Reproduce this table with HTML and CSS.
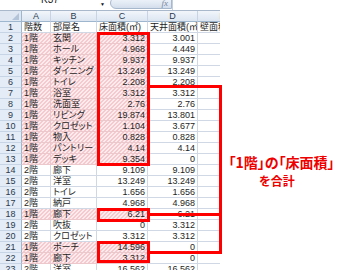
FILE: index.html
```html
<!DOCTYPE html>
<html lang="ja">
<head>
<meta charset="utf-8">
<link rel="stylesheet" href="styles.css">
</head>
<body>
<div class="page">
  <div class="sheet">
    <div class="topbar">
      <div class="namebox">K37</div>
      <div class="dd">▼</div>
      <div class="pill"><span class="fx">fx</span></div>
      <div class="input"></div>
    </div>
    <div class="grid">
      <div class="c corner"><span class="tri"></span></div><div class="c ch">A</div><div class="c ch">B</div><div class="c ch">C</div><div class="c ch">D</div><div class="c ch">E</div>
      <div class="c rh">1</div><div class="c">階数</div><div class="c">部屋名</div><div class="c">床面積(㎡)</div><div class="c">天井面積(㎡)</div><div class="c">壁面積(㎡)</div>
      <div class="c rh">2</div><div class="c hl">1階</div><div class="c hl">玄関</div><div class="c n hl">3.312</div><div class="c n">3.001</div><div class="c"></div>
      <div class="c rh">3</div><div class="c hl">1階</div><div class="c hl">ホール</div><div class="c n hl">4.968</div><div class="c n">4.449</div><div class="c"></div>
      <div class="c rh">4</div><div class="c hl">1階</div><div class="c hl">キッチン</div><div class="c n hl">9.937</div><div class="c n">9.937</div><div class="c"></div>
      <div class="c rh">5</div><div class="c hl">1階</div><div class="c hl">ダイニング</div><div class="c n hl">13.249</div><div class="c n">13.249</div><div class="c"></div>
      <div class="c rh">6</div><div class="c hl">1階</div><div class="c hl">トイレ</div><div class="c n hl">2.208</div><div class="c n">2.208</div><div class="c"></div>
      <div class="c rh">7</div><div class="c hl">1階</div><div class="c hl">浴室</div><div class="c n hl">3.312</div><div class="c n">3.312</div><div class="c"></div>
      <div class="c rh">8</div><div class="c hl">1階</div><div class="c hl">洗面室</div><div class="c n hl">2.76</div><div class="c n">2.76</div><div class="c"></div>
      <div class="c rh">9</div><div class="c hl">1階</div><div class="c hl">リビング</div><div class="c n hl">19.874</div><div class="c n">13.801</div><div class="c"></div>
      <div class="c rh">10</div><div class="c hl">1階</div><div class="c hl">クロゼット</div><div class="c n hl">1.104</div><div class="c n">3.677</div><div class="c"></div>
      <div class="c rh">11</div><div class="c hl">1階</div><div class="c hl">物入</div><div class="c n hl">0.828</div><div class="c n">0.828</div><div class="c"></div>
      <div class="c rh">12</div><div class="c hl">1階</div><div class="c hl">パントリー</div><div class="c n hl">4.14</div><div class="c n">4.14</div><div class="c"></div>
      <div class="c rh">13</div><div class="c hl">1階</div><div class="c hl">デッキ</div><div class="c n hl">9.354</div><div class="c n">0</div><div class="c"></div>
      <div class="c rh">14</div><div class="c">2階</div><div class="c">廊下</div><div class="c n">9.109</div><div class="c n">9.109</div><div class="c"></div>
      <div class="c rh">15</div><div class="c">2階</div><div class="c">洋室</div><div class="c n">13.249</div><div class="c n">13.249</div><div class="c"></div>
      <div class="c rh">16</div><div class="c">2階</div><div class="c">トイレ</div><div class="c n">1.656</div><div class="c n">1.656</div><div class="c"></div>
      <div class="c rh">17</div><div class="c">2階</div><div class="c">納戸</div><div class="c n">4.968</div><div class="c n">4.968</div><div class="c"></div>
      <div class="c rh">18</div><div class="c hl">1階</div><div class="c hl">廊下</div><div class="c n hl">6.21</div><div class="c n">6.21</div><div class="c"></div>
      <div class="c rh">19</div><div class="c">2階</div><div class="c">吹抜</div><div class="c n">0</div><div class="c n">3.312</div><div class="c"></div>
      <div class="c rh">20</div><div class="c">2階</div><div class="c">クロゼット</div><div class="c n">3.312</div><div class="c n">3.312</div><div class="c"></div>
      <div class="c rh">21</div><div class="c hl">1階</div><div class="c hl">ポーチ</div><div class="c n hl">14.596</div><div class="c n">0</div><div class="c"></div>
      <div class="c rh">22</div><div class="c hl">1階</div><div class="c hl">廊下</div><div class="c n hl">3.312</div><div class="c n">0</div><div class="c"></div>
      <div class="c rh">23</div><div class="c">2階</div><div class="c">洋室</div><div class="c n">16.562</div><div class="c n">16.562</div><div class="c"></div>
    </div>
  </div>
  <div class="note">
    <div class="l1">「1階」の「床面積」</div>
    <div class="l2">を合計</div>
  </div>
  <svg class="marks" width="340" height="270" viewBox="0 0 340 270">
    <g fill="none" stroke="#ff0000" stroke-width="3">
      <rect x="98.5" y="33.5" width="50" height="131"/>
      <rect x="98.5" y="209.5" width="50" height="11"/>
      <rect x="98.5" y="242.5" width="50" height="19"/>
      <path d="M150 86.5H220.5V252.5H150M150 214.5H220.5"/>
    </g>
  </svg>
</div>
</body>
</html>
```
FILE: styles.css
```css
html, body {
  margin: 0;
  padding: 0;
  background: #ffffff;
}

.page {
  position: relative;
  width: 340px;
  height: 270px;
  overflow: hidden;
  display: flex;
  font-family: "Liberation Sans", "Noto Sans CJK JP", sans-serif;
}

.sheet {
  width: 220px;
  flex: none;
  overflow: hidden;
  display: flex;
  flex-direction: column;
}

/* formula bar (clipped at the top) */
.topbar {
  height: 10px;
  flex: none;
  display: flex;
  overflow: hidden;
  border-bottom: 1px solid #a9b8cb;
  background: #ffffff;
}

.namebox {
  width: 100px;
  flex: none;
  margin-top: -7px;
  font-size: 10px;
  line-height: 14px;
  text-align: center;
  color: #222;
}

.dd {
  width: 8px;
  flex: none;
  font-size: 5px;
  line-height: 6px;
  color: #111;
  margin-top: 1px;
}

.pill {
  width: 62px;
  height: 12px;
  flex: none;
  margin-top: -3px;
  margin-left: 2px;
  box-sizing: border-box;
  border: 1px solid #a7b8cd;
  border-radius: 7px 0 0 7px;
  background: linear-gradient(#f2f6fb, #d3deec);
  display: flex;
  justify-content: flex-end;
  align-items: center;
  padding-right: 3px;
}

.fx {
  font-family: "Liberation Serif", serif;
  font-style: italic;
  font-size: 9px;
  line-height: 9px;
  color: #7a8aa0;
}

.input {
  flex: 1;
  border-left: 1px solid #c3cfdf;
}

/* grid */
.grid {
  display: grid;
  grid-template-columns: 22px 29px 46px 51px 50px 50px;
  grid-auto-rows: 11px;
  width: max-content;
}

.c {
  box-sizing: border-box;
  border-right: 1px solid #d0d7e5;
  border-bottom: 1px solid #d0d7e5;
  padding: 0 2px;
  font-size: 9px;
  line-height: 10px;
  white-space: nowrap;
  overflow: hidden;
  color: #1e1e1e;
  font-feature-settings: "palt" 1;
}

.n {
  text-align: right;
}

.hl {
  background-image: linear-gradient(135deg,
    #fdecee 25%, #f6c9ce 25%, #f6c9ce 50%,
    #fdecee 50%, #fdecee 75%, #f6c9ce 75%);
  background-size: 4px 4px;
  background-attachment: fixed;
  border-color: #ecc8cd;
}

.rh {
  padding: 0;
  text-align: center;
  background: #e4ecf7;
  color: #2b3a4e;
  border-right-color: #9eb6ce;
  border-bottom-color: #c6d4e6;
}

.ch {
  padding: 0;
  text-align: center;
  background: linear-gradient(#f2f6fb, #dce5f1);
  color: #2b3a4e;
  border-right-color: #c6d4e6;
  border-bottom-color: #9eb6ce;
}

.corner {
  padding: 0;
  background: #dfe7f3;
  border-right-color: #9eb6ce;
  border-bottom-color: #9eb6ce;
  display: flex;
  justify-content: flex-end;
  align-items: flex-end;
}

.tri {
  width: 0;
  height: 0;
  border-left: 7px solid transparent;
  border-bottom: 7px solid #b3c4d9;
  margin: 0 2px 1px 0;
}

/* annotation */
.note {
  flex: 1;
  display: flex;
  flex-direction: column;
  align-items: center;
  padding-top: 153px;
  font-family: "Noto Sans CJK JP", sans-serif;
  font-weight: bold;
  color: #ee0000;
  white-space: nowrap;
  text-spacing-trim: space-all;
  font-feature-settings: "palt" 1;
}

.l1 {
  font-size: 14px;
  line-height: 18px;
  padding-left: 3px;
}

.l2 {
  font-size: 12px;
  line-height: 15px;
  margin-top: 2px;
  padding-right: 6px;
}

.marks {
  position: absolute;
  left: 0;
  top: 0;
  pointer-events: none;
}
```
